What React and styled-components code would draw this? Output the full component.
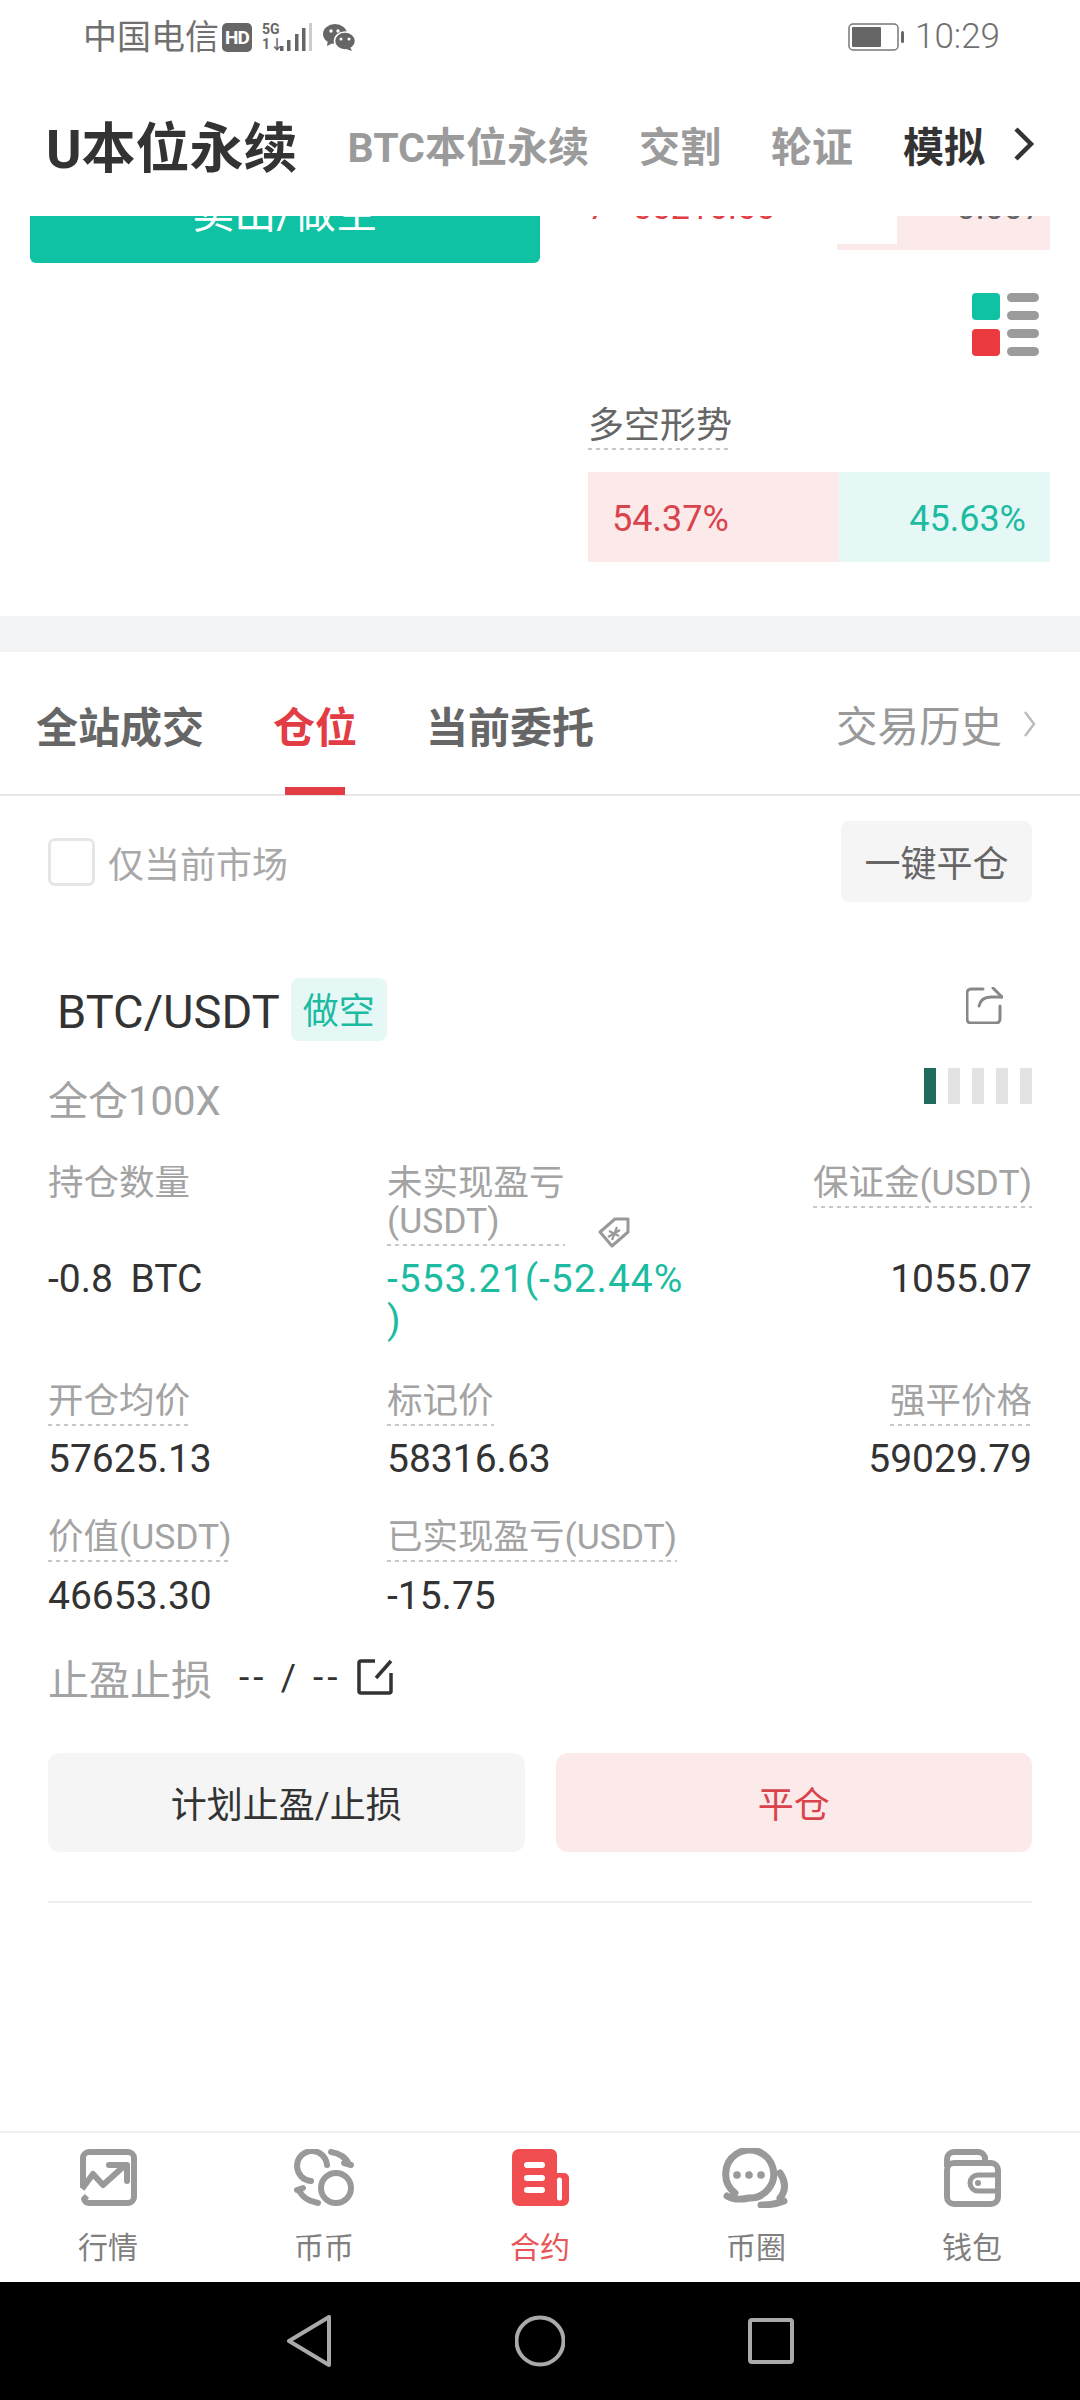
import React from 'react';
import styled, { createGlobalStyle } from 'styled-components';

const GlobalStyle = createGlobalStyle`
    html, body {
        margin: 0;
        padding: 0;
        background: #fff;
    }
    * {
        box-sizing: border-box;
    }
`;

const red = '#e23c44';
const teal = '#1dbba2';

const Page = styled.div`
    width: 1080px;
    height: 2400px;
    display: flex;
    flex-direction: column;
    overflow: hidden;
    background: #fff;
    font-family: Roboto, "Noto Sans CJK SC", sans-serif;
`;

const StatusBar = styled.div`
    height: 70px;
    flex: none;
    display: flex;
    align-items: center;
    padding: 4px 80px 0 83px;
    color: #707070;
`;

const Carrier = styled.span`
    font-size: 34px;
    line-height: 40px;
    margin-right: 3px;
    white-space: nowrap;
`;

const HdBadge = styled.span`
    width: 30px;
    height: 29px;
    margin-right: 10px;
    border-radius: 5px;
    background: #666;
    color: #fff;
    font-size: 19px;
    font-weight: 700;
    line-height: 29px;
    text-align: center;
    letter-spacing: -1px;
`;

const NetworkLabel = styled.div`
    width: 18px;
    height: 30px;
    display: flex;
    flex-direction: column;
    justify-content: space-between;
    color: #666;
    font-size: 14px;
    font-weight: 700;
    line-height: 15px;
    white-space: nowrap;
`;

const StatusRight = styled.div`
    margin-left: auto;
    display: flex;
    align-items: center;
    gap: 10px;
`;

const Clock = styled.span`
    font-size: 35px;
    font-weight: 300;
    line-height: 40px;
`;

const Header = styled.div`
    height: 146px;
    flex: none;
    display: flex;
    align-items: center;
    gap: 50px;
    padding: 2px 0 0 46px;
    background: #fff;
`;

const HeaderTab = styled.span`
    font-size: ${p => (p.$main ? 54 : 41)}px;
    font-weight: 700;
    color: ${p => (p.$dark ? '#333' : '#9b9b9b')};
    white-space: nowrap;
`;

const HeaderArrow = styled.svg`
    margin-left: -23px;
`;

const Scroller = styled.div`
    flex: 1;
    min-height: 0;
    overflow: hidden;
`;

const TradeSection = styled.div`
    height: 400px;
    display: flex;
`;

const SellColumn = styled.div`
    width: 588px;
    padding-left: 30px;
`;

const SellButton = styled.div`
    width: 510px;
    height: 98px;
    margin-top: -51px;
    border-radius: 6px;
    background: #0fc2a3;
    color: #fff;
    font-size: 42px;
    line-height: 98px;
    text-align: center;
`;

const BookColumn = styled.div`
    width: 462px;
    display: flex;
    flex-direction: column;
`;

const BookRow = styled.div`
    height: ${p => p.$height}px;
    margin-top: ${p => p.$top || 0}px;
    display: flex;
    align-items: center;
    justify-content: space-between;
    padding-right: 8px;
    font-size: 34px;
    background: linear-gradient(#fce9ea, #fce9ea) right / ${p => p.$depth}px 100% no-repeat;
`;

const BookPrice = styled.span`
    color: ${red};
`;

const BookAmount = styled.span`
    color: #666;
`;

const LegendIcon = styled.svg`
    align-self: flex-end;
    margin: 43px 11px 0 0;
    display: block;
`;

const Dashed = styled.span`
    display: inline-block;
    padding-bottom: ${p => p.$pad ?? 6}px;
    background-image: linear-gradient(to right, #c9c9c9 55%, transparent 0);
    background-size: 8px 2px;
    background-position: left bottom;
    background-repeat: repeat-x;
`;

const RatioTitle = styled.div`
    margin-top: 48px;
    font-size: 36px;
    line-height: 44px;
    color: #666;
`;

const RatioBar = styled.div`
    display: flex;
    height: 90px;
    margin-top: 22px;
    font-size: 36px;
    line-height: 94px;
`;

const RatioPart = styled.div`
    background: ${p => (p.$long ? '#fce9ea' : '#e5f8f6')};
    color: ${p => (p.$long ? '#d9434c' : teal)};
    text-align: ${p => (p.$long ? 'left' : 'right')};
    padding: 0 24px;
`;

const Band = styled.div`
    height: 36px;
    background: #f1f3f5;
`;

const TabBar = styled.div`
    height: 144px;
    display: flex;
    align-items: center;
    gap: 69px;
    padding: 2px 44px 0 36px;
    border-bottom: 2px solid #e8e8e8;
`;

const Tab = styled.div`
    position: relative;
    font-size: 42px;
    font-weight: 700;
    color: ${p => (p.$active ? red : '#666')};

    ${p => p.$active && `
        &::after {
            content: "";
            position: absolute;
            left: 12px;
            bottom: -40px;
            width: 60px;
            height: 8px;
            background: ${red};
        }
    `}
`;

const HistoryLink = styled.div`
    margin-left: auto;
    display: flex;
    align-items: center;
    gap: 22px;
    font-size: 41.5px;
    color: #999;
`;

const Toolbar = styled.div`
    display: flex;
    align-items: center;
    justify-content: space-between;
    padding: 25px 48px 0 48px;
`;

const MarketFilter = styled.div`
    display: flex;
    align-items: center;
    gap: 13px;
    font-size: 36px;
    color: #a8a8a8;
`;

const CheckBox = styled.span`
    width: 47px;
    height: 48px;
    border: 3px solid #e6e6e6;
    border-radius: 7px;
`;

const CloseAllButton = styled.div`
    width: 191px;
    height: 81px;
    border-radius: 8px;
    background: #f5f5f5;
    color: #666;
    font-size: 36px;
    line-height: 88px;
    text-align: center;
`;

const PositionCard = styled.div`
    margin-top: 76px;
    padding: 0 48px 0 48px;
`;

const TitleRow = styled.div`
    height: 63px;
    display: flex;
    align-items: center;
`;

const Symbol = styled.span`
    margin-left: 9px;
    padding-top: 4px;
    font-size: 47px;
    color: #333;
`;

const SideTag = styled.span`
    width: 96px;
    height: 63px;
    margin-left: 11px;
    border-radius: 8px;
    background: #e5f8f6;
    color: ${teal};
    font-size: 36px;
    line-height: 68px;
    text-align: center;
`;

const ShareIcon = styled.svg`
    margin: -8px 29px 0 auto;
`;

const LeverageRow = styled.div`
    height: 58px;
    margin-top: 27px;
    display: flex;
    justify-content: space-between;
`;

const Leverage = styled.span`
    align-self: flex-end;
    font-size: 40px;
    line-height: 48px;
    color: #a3a3a3;
`;

const RiskBars = styled.div`
    display: flex;
    gap: 12px;
    height: 36px;
`;

const RiskBar = styled.span`
    width: 12px;
    background: ${p => (p.$on ? '#1f6b5c' : '#e3e3e3')};
`;

const MetricRow = styled.div`
    margin-top: ${p => p.$top}px;
`;

const Columns = styled.div`
    display: grid;
    grid-template-columns: 339px 312px 1fr;
    margin-top: ${p => p.$top || 0}px;
`;

const LabelCell = styled.div`
    display: flex;
    align-items: flex-end;
    gap: 33px;
    font-size: 35.5px;
    line-height: 38px;
    color: #a3a3a3;
    justify-content: ${p => (p.$right ? 'flex-end' : 'flex-start')};
    align-self: start;
`;

const LabelText = styled(Dashed)`
    max-width: ${p => p.$max || 'none'};
`;

const Value = styled.div`
    font-size: 39px;
    line-height: 41px;
    letter-spacing: ${p => (p.$loss ? 1 : 0)}px;
    word-spacing: 8px;
    color: ${p => (p.$loss ? teal : '#333')};
    text-align: ${p => (p.$right ? 'right' : 'left')};
`;

const StopRow = styled.div`
    height: 50px;
    margin-top: 35px;
    display: flex;
    align-items: center;
`;

const StopLabel = styled.span`
    font-size: 41px;
    color: #a3a3a3;
`;

const StopValue = styled.span`
    margin: 0 15px 0 27px;
    font-size: 37px;
    letter-spacing: 4px;
    color: #333;
`;

const ActionRow = styled.div`
    display: flex;
    gap: 31px;
    margin-top: 51px;
`;

const ActionButton = styled.div`
    flex: 1;
    height: 99px;
    border-radius: 12px;
    background: ${p => (p.$danger ? '#fce9ea' : '#f5f5f5')};
    color: ${p => (p.$danger ? '#d9434c' : '#333')};
    font-size: 36px;
    line-height: 106px;
    text-align: center;
`;

const Divider = styled.div`
    height: 2px;
    margin-top: 49px;
    background: #eee;
`;

const BottomNav = styled.div`
    height: 151px;
    flex: none;
    display: grid;
    grid-template-columns: repeat(5, 216px);
    border-top: 2px solid #f0f0f0;
    background: #fff;
`;

const NavItem = styled.div`
    display: flex;
    flex-direction: column;
    align-items: center;
    color: ${p => (p.$active ? '#e8565a' : '#808080')};
    font-size: 30px;
    line-height: 38px;
`;

const NavIcon = styled.div`
    height: 60px;
    margin-top: 15px;
    margin-bottom: 21px;
    display: flex;
    align-items: center;
`;

const SystemBar = styled.div`
    height: 118px;
    flex: none;
    background: #000;
    display: flex;
    align-items: center;
    justify-content: center;
    gap: 183px;
`;

const tabs = ['全站成交', '仓位', '当前委托'];

function TrendIcon() {
    return (
        <svg width="57" height="58" viewBox="0 0 57 58" fill="none" stroke="#999" strokeWidth="6" strokeLinecap="round" strokeLinejoin="round">
            <path d="M3 38V9a6 6 0 0 1 6-6h39a6 6 0 0 1 6 6v39a6 6 0 0 1-6 6H9a5 5 0 0 1-5-4l3-3" strokeLinecap="butt" />
            <path d="M2 40l11-15 10 11 20-18" strokeLinecap="butt" />
            <path d="M29 16h18v16" />
        </svg>
    );
}

function SwapIcon() {
    return (
        <svg width="61" height="58" viewBox="0 0 61 58" fill="none" stroke="#999" strokeWidth="6" strokeLinecap="round">
            <path d="M33 16A15 15 0 1 0 17 32" />
            <circle cx="42" cy="39" r="15" />
            <path d="M37 3Q50 5 55 15" />
            <path d="M5 41Q9 51 24 54" />
            <path d="M50 14l7 2M3 41l6-2" />
        </svg>
    );
}

function ContractIcon() {
    return (
        <svg width="57" height="58" viewBox="0 0 57 58">
            <path d="M7 0h32a6 6 0 0 1 6 6v18h7a5 5 0 0 1 5 5v22a6 6 0 0 1-6 6H7a7 7 0 0 1-7-7V7a7 7 0 0 1 7-7z" fill="#f04e50" />
            <path d="M15 16h15M15 29h15M15 41h15" stroke="#fff" strokeWidth="6" strokeLinecap="round" />
            <path d="M47.5 31v18" stroke="#fff" strokeWidth="5" strokeLinecap="round" />
        </svg>
    );
}

function ChatIcon() {
    return (
        <svg width="68" height="60" viewBox="0 0 68 60" fill="none" stroke="#999" strokeWidth="7" strokeLinecap="round">
            <path d="M13 45A24 24 0 1 1 27 50Q13 53 5 48" />
            <path d="M58 25Q67 39 58 50" />
            <path d="M39 57Q52 57 62 53" />
            <g fill="#999" stroke="none">
                <circle cx="15" cy="27" r="3.8" />
                <circle cx="27" cy="27" r="3.8" />
                <circle cx="39" cy="27" r="3.8" />
            </g>
        </svg>
    );
}

function WalletIcon() {
    return (
        <svg width="57" height="58" viewBox="0 0 57 58" fill="none" stroke="#999" strokeWidth="6">
            <rect x="3" y="14" width="51" height="41" rx="7" />
            <path d="M3 18V10a7 7 0 0 1 7-7h24a7 7 0 0 1 7 8v3" />
            <path d="M54 26H34a8 8 0 0 0 0 16h20" strokeWidth="5" />
            <circle cx="34" cy="34" r="3" fill="#999" stroke="none" />
        </svg>
    );
}

const navItems = [
    { label: '行情', Icon: TrendIcon },
    { label: '币币', Icon: SwapIcon },
    { label: '合约', Icon: ContractIcon, active: true },
    { label: '币圈', Icon: ChatIcon },
    { label: '钱包', Icon: WalletIcon },
];

function SignalBars() {
    return (
        <svg width="32" height="30" viewBox="0 0 32 30" fill="#666">
            <rect x="0" y="24" width="3.5" height="5" />
            <rect x="7" y="18" width="3.5" height="11" />
            <rect x="15" y="12" width="3.5" height="17" />
            <rect x="22" y="6" width="3.5" height="23" />
            <rect x="29" y="1" width="3" height="28" fill="#ccc" />
        </svg>
    );
}

function WechatIcon() {
    return (
        <svg width="32" height="27" viewBox="0 0 32 27" style={{ marginLeft: 11 }}>
            <ellipse cx="12" cy="10" rx="12" ry="10" fill="#666" />
            <path d="M5 16l-1 6 6-3z" fill="#666" />
            <ellipse cx="22" cy="17" rx="10.5" ry="9" fill="#666" stroke="#fff" strokeWidth="1.5" />
            <path d="M27 23l2 4-6-2z" fill="#666" />
            <g fill="#fff">
                <circle cx="8" cy="7" r="1.7" />
                <circle cx="15" cy="7" r="1.7" />
                <circle cx="18" cy="15" r="1.5" />
                <circle cx="26" cy="15" r="1.5" />
            </g>
        </svg>
    );
}

function BatteryIcon() {
    return (
        <svg width="57" height="28" viewBox="0 0 57 28">
            <rect x="1" y="1" width="49" height="26" rx="4" fill="#fff" stroke="#777" strokeWidth="1.5" />
            <rect x="4" y="4" width="29" height="20" rx="1" fill="#666" />
            <rect x="53" y="8" width="3" height="12" rx="1.5" fill="#666" />
        </svg>
    );
}

function App() {
    return (
        <Page>
            <GlobalStyle />
            <StatusBar>
                <Carrier>中国电信</Carrier>
                <HdBadge>HD</HdBadge>
                <NetworkLabel>
                    <span>5G</span>
                    <span>1↓</span>
                </NetworkLabel>
                <SignalBars />
                <WechatIcon />
                <StatusRight>
                    <BatteryIcon />
                    <Clock>10:29</Clock>
                </StatusRight>
            </StatusBar>
            <Header>
                <HeaderTab $main $dark>U本位永续</HeaderTab>
                <HeaderTab>BTC本位永续</HeaderTab>
                <HeaderTab>交割</HeaderTab>
                <HeaderTab>轮证</HeaderTab>
                <HeaderTab $dark>模拟</HeaderTab>
                <HeaderArrow width="24" height="36" viewBox="0 0 24 36" fill="none" stroke="#333" strokeWidth="4.5">
                    <path d="M4 3l15 15L4 33" />
                </HeaderArrow>
            </Header>
            <Scroller>
                <TradeSection>
                    <SellColumn>
                        <SellButton>卖出/做空</SellButton>
                    </SellColumn>
                    <BookColumn>
                        <BookRow $height={74} $top={-46} $depth={153}>
                            <BookPrice>7&nbsp;&nbsp;&nbsp;55216.66</BookPrice>
                            <BookAmount>0.007</BookAmount>
                        </BookRow>
                        <BookRow $height={6} $depth={213} />
                        <LegendIcon width="67" height="63" viewBox="0 0 67 63">
                            <rect x="0" y="0" width="28" height="27" rx="4" fill="#0fc2a3" />
                            <rect x="0" y="36" width="28" height="27" rx="4" fill="#ea3a3d" />
                            <g fill="#9b9b9b">
                                <rect x="35" y="0" width="32" height="9" rx="4.5" />
                                <rect x="35" y="18" width="32" height="9" rx="4.5" />
                                <rect x="35" y="36" width="32" height="9" rx="4.5" />
                                <rect x="35" y="54" width="32" height="9" rx="4.5" />
                            </g>
                        </LegendIcon>
                        <RatioTitle>
                            <Dashed $pad={2}>多空形势</Dashed>
                        </RatioTitle>
                        <RatioBar>
                            <RatioPart $long style={{ width: '54.37%' }}>54.37%</RatioPart>
                            <RatioPart style={{ width: '45.63%' }}>45.63%</RatioPart>
                        </RatioBar>
                    </BookColumn>
                </TradeSection>
                <Band />
                <TabBar>
                    {tabs.map(tab => (
                        <Tab key={tab} $active={tab === '仓位'}>{tab}</Tab>
                    ))}
                    <HistoryLink>
                        交易历史
                        <svg width="12" height="26" viewBox="0 0 12 26" fill="none" stroke="#bbb" strokeWidth="2.5">
                            <path d="M1 1l9 12-9 12" />
                        </svg>
                    </HistoryLink>
                </TabBar>
                <Toolbar>
                    <MarketFilter>
                        <CheckBox />
                        仅当前市场
                    </MarketFilter>
                    <CloseAllButton>一键平仓</CloseAllButton>
                </Toolbar>
                <PositionCard>
                    <TitleRow>
                        <Symbol>BTC/USDT</Symbol>
                        <SideTag>做空</SideTag>
                        <ShareIcon width="37" height="37" viewBox="0 0 37 37" fill="none" stroke="#888" strokeWidth="3" strokeLinecap="round">
                            <path d="M17 2H5a4 4 0 0 0-4 4v26a4 4 0 0 0 4 4h25a4 4 0 0 0 4-4V19" />
                            <path d="M13 19q2-9 12-9h11" />
                            <path d="M27 1l9 9" />
                        </ShareIcon>
                    </TitleRow>
                    <LeverageRow>
                        <Leverage>全仓100X</Leverage>
                        <RiskBars>
                            {[true, false, false, false, false].map((on, i) => (
                                <RiskBar key={i} $on={on} />
                            ))}
                        </RiskBars>
                    </LeverageRow>
                    <MetricRow $top={38}>
                        <Columns>
                            <LabelCell>持仓数量</LabelCell>
                            <LabelCell>
                                <LabelText $max="178px">未实现盈亏(USDT)</LabelText>
                                <svg width="32" height="31" viewBox="0 0 32 31" fill="none" stroke="#999" strokeWidth="3" strokeLinejoin="round" style={{ marginBottom: -2 }}>
                                    <path d="M2 15L17 2h13v13L14 29z" />
                                    <path d="M11 14l10 5M19 10l-5 13M10 20l12-7" strokeWidth="2.2" />
                                </svg>
                            </LabelCell>
                            <LabelCell $right>
                                <Dashed>保证金(USDT)</Dashed>
                            </LabelCell>
                        </Columns>
                        <Columns $top={13}>
                            <Value>-0.8 BTC</Value>
                            <Value $loss>-553.21(-52.44%<br />)</Value>
                            <Value $right>1055.07</Value>
                        </Columns>
                    </MetricRow>
                    <MetricRow $top={41}>
                        <Columns>
                            <LabelCell><Dashed>开仓均价</Dashed></LabelCell>
                            <LabelCell><Dashed>标记价</Dashed></LabelCell>
                            <LabelCell $right><Dashed>强平价格</Dashed></LabelCell>
                        </Columns>
                        <Columns $top={13}>
                            <Value>57625.13</Value>
                            <Value>58316.63</Value>
                            <Value $right>59029.79</Value>
                        </Columns>
                    </MetricRow>
                    <MetricRow $top={38}>
                        <Columns>
                            <LabelCell><Dashed>价值(USDT)</Dashed></LabelCell>
                            <LabelCell><Dashed>已实现盈亏(USDT)</Dashed></LabelCell>
                        </Columns>
                        <Columns $top={14}>
                            <Value>46653.30</Value>
                            <Value>-15.75</Value>
                        </Columns>
                    </MetricRow>
                    <StopRow>
                        <StopLabel>止盈止损</StopLabel>
                        <StopValue>-- / --</StopValue>
                        <svg width="37" height="36" viewBox="0 0 37 36" fill="none" stroke="#333" strokeWidth="3.5">
                            <path d="M18 2H4a2 2 0 0 0-2 2v28a2 2 0 0 0 2 2h28a2 2 0 0 0 2-2V14" />
                            <path d="M19 19L34 2" />
                        </svg>
                    </StopRow>
                    <ActionRow>
                        <ActionButton>计划止盈/止损</ActionButton>
                        <ActionButton $danger>平仓</ActionButton>
                    </ActionRow>
                    <Divider />
                </PositionCard>
            </Scroller>
            <BottomNav>
                {navItems.map(({ label, Icon, active }) => (
                    <NavItem key={label} $active={active}>
                        <NavIcon><Icon /></NavIcon>
                        {label}
                    </NavItem>
                ))}
            </BottomNav>
            <SystemBar>
                <svg width="46" height="52" viewBox="0 0 46 52" fill="none" stroke="#aaa" strokeWidth="4" strokeLinejoin="round">
                    <path d="M43 2v48L3 26z" />
                </svg>
                <svg width="50" height="52" viewBox="0 0 50 52" fill="none" stroke="#aaa" strokeWidth="4">
                    <circle cx="25" cy="26" r="23.5" />
                </svg>
                <svg width="46" height="46" viewBox="0 0 46 46" fill="none" stroke="#aaa" strokeWidth="4" strokeLinejoin="round">
                    <rect x="2" y="2" width="42" height="42" rx="2" />
                </svg>
            </SystemBar>
        </Page>
    );
}

export default App;
